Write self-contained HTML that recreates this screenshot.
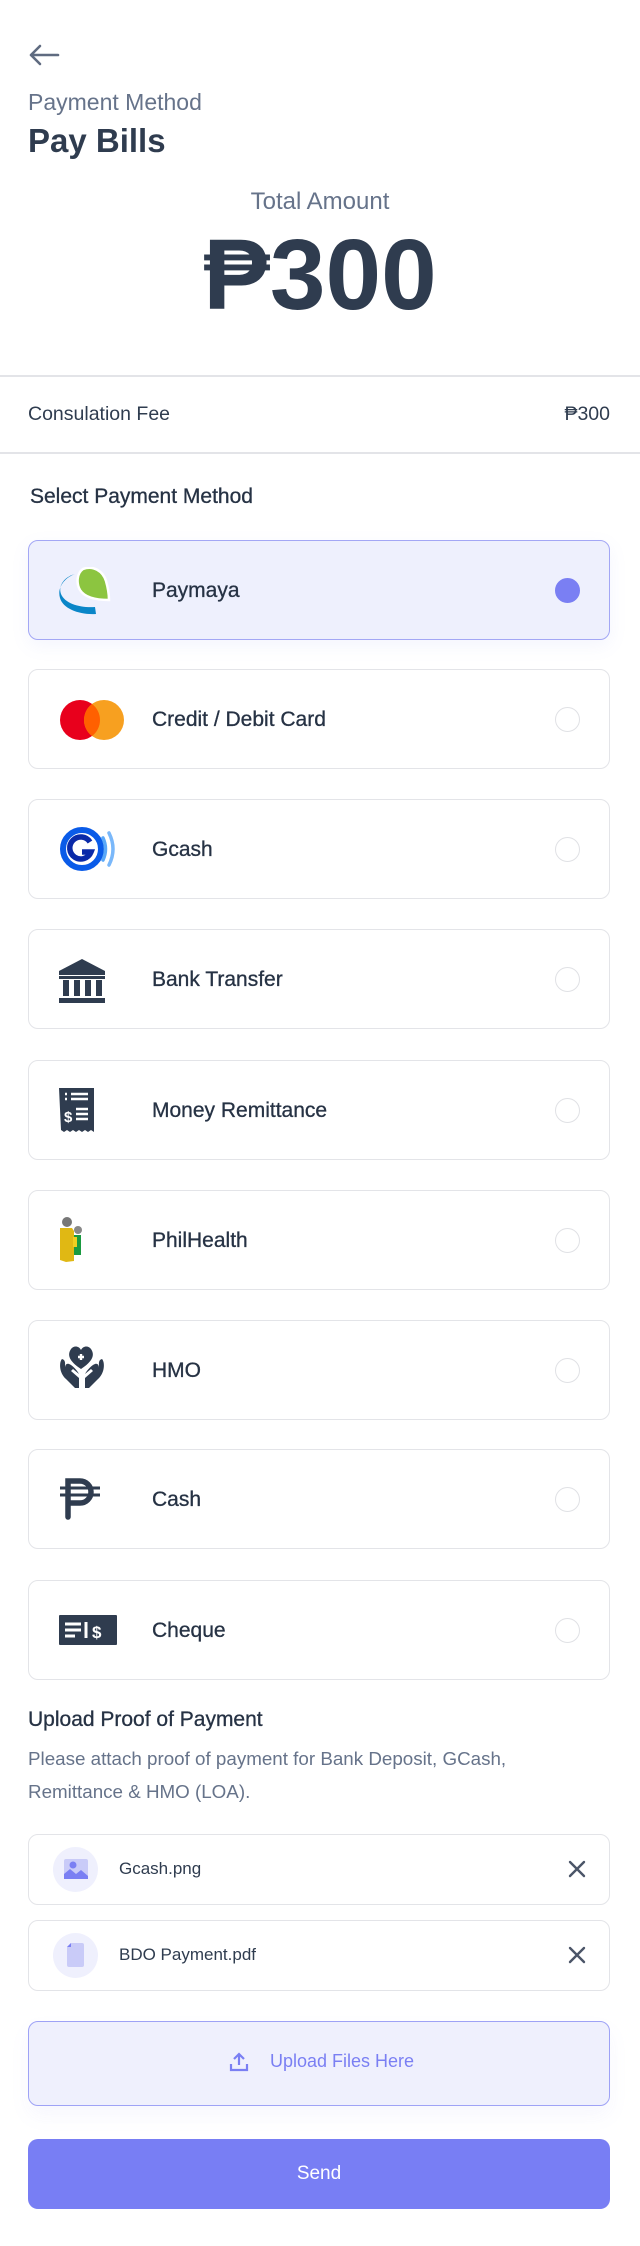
<!DOCTYPE html>
<html><head><meta charset="utf-8">
<style>
*{box-sizing:border-box;margin:0;padding:0}
body{width:640px;height:2246px;background:#fff;font-family:"Liberation Sans","DejaVu Sans",sans-serif;color:#2f3c4f;position:relative;overflow:hidden}
.a{position:absolute}
.card{position:absolute;left:28px;width:582px;height:100px;border:1.5px solid #e3e4e8;border-radius:10px;background:#fff}
.card.sel{background:#eef0fd;border-color:#a3a7f5;box-shadow:0 6px 18px rgba(120,125,240,0.08)}
.card .lbl{position:absolute;left:123px;top:1px;line-height:97px;font-size:21px;color:#263244;-webkit-text-stroke:0.3px #263244}
.card .rad{position:absolute;left:526px;top:37px;width:25px;height:25px;border:1.5px solid #e0e1e5;border-radius:50%}
.card.sel .rad{background:#7a7ff3;border-color:#7a7ff3}
.card .ic{position:absolute;left:30px;top:26px}
.file{position:absolute;left:28px;width:582px;height:71px;border:1.5px solid #e3e4e8;border-radius:10px;background:#fff}
.file .circ{position:absolute;left:24px;top:12px;width:45px;height:45px;border-radius:50%;background:#eff0fd}
.file .nm{position:absolute;left:90px;top:0;line-height:68px;font-size:17px;color:#2f3c4f}
.file .x{position:absolute;left:539px;top:25px}
</style></head><body>
<svg class="a" style="left:28px;top:44px" width="32" height="22" viewBox="0 0 32 22"><path d="M30 11H3M12 2L3 11l9 9" fill="none" stroke="#5f6b80" stroke-width="2.6" stroke-linecap="round" stroke-linejoin="round"/></svg>
<div class="a" style="left:28px;top:89px;font-size:23px;color:#66738a">Payment Method</div>
<div class="a" style="left:28px;top:122px;font-size:33px;font-weight:bold;color:#2f3c4f">Pay Bills</div>
<div class="a" style="left:0;width:640px;text-align:center;top:188px;font-size:24px;color:#66738a">Total Amount</div>
<div class="a" style="left:0;width:640px;text-align:center;top:219px;font-size:100px;line-height:112px;font-weight:bold;color:#2f3c4f">₱300</div>
<div class="a" style="left:0;top:375px;width:640px;height:1.5px;background:#e3e4e8"></div>
<div class="a" style="left:28px;top:403px;font-size:19.5px;color:#2f3c4f">Consulation Fee</div>
<div class="a" style="right:30px;top:403px;font-size:19.5px;color:#2f3c4f">₱300</div>
<div class="a" style="left:0;top:452px;width:640px;height:1.5px;background:#e3e4e8"></div>
<div class="a" style="left:30px;top:485px;font-size:21px;color:#263244;-webkit-text-stroke:0.3px #263244">Select Payment Method</div>

<div class="card sel" style="top:540px"><svg class="ic" style="top:26px" width="54" height="48" viewBox="0 0 54 48"><path d="M16 7C5 10 -1 19 2 27c4 10 20 14 34 13l1 7C21 48 4 42 1 31-2 21 5 11 16 7z" fill="#0a86c8"/><path d="M24 2c10-4 20 2 23 12 2 7 3 13 3 19-12 0-24-2-29-10-4-7-3-17 3-21z" fill="#8cc540" stroke="#fff" stroke-width="2.5"/></svg><div class="lbl">Paymaya</div><div class="rad"></div></div>

<div class="card" style="top:669px"><svg class="ic" style="top:29px" width="66" height="42" viewBox="0 0 66 42"><circle cx="21" cy="21" r="20" fill="#e8001c"/><circle cx="45" cy="21" r="20" fill="#f7a020"/><path d="M33 5a20 20 0 0 1 0 32a20 20 0 0 1 0-32z" fill="#ff6000"/></svg><div class="lbl">Credit / Debit Card</div><div class="rad"></div></div>

<div class="card" style="top:799px"><svg class="ic" style="top:24px" width="56" height="50" viewBox="0 0 56 50"><circle cx="23" cy="25" r="19" fill="none" stroke="#0a5be8" stroke-width="6"/><path d="M31 18a11 11 0 1 0 1 10H23" fill="none" stroke="#0a2aa8" stroke-width="5.5"/><path d="M44 14q5 11 0 22" fill="none" stroke="#5aa8f8" stroke-width="3.5" stroke-linecap="round"/><path d="M50 9q8 16 0 32" fill="none" stroke="#7ab8fa" stroke-width="3.5" stroke-linecap="round"/></svg><div class="lbl">Gcash</div><div class="rad"></div></div>

<div class="card" style="top:929px"><svg class="ic" style="top:29px" width="46" height="46" viewBox="0 0 46 46"><path d="M23 0L0 12v4h46v-4z" fill="#2f3c4f"/><rect x="0" y="17" width="46" height="3" fill="#2f3c4f"/><rect x="4" y="21" width="6" height="16" fill="#2f3c4f"/><rect x="15" y="21" width="6" height="16" fill="#2f3c4f"/><rect x="26" y="21" width="6" height="16" fill="#2f3c4f"/><rect x="37" y="21" width="6" height="16" fill="#2f3c4f"/><rect x="0" y="39" width="46" height="5" fill="#2f3c4f"/></svg><div class="lbl">Bank Transfer</div><div class="rad"></div></div>

<div class="card" style="top:1060px"><svg class="ic" style="top:27px" width="36" height="46" viewBox="0 0 36 46"><path d="M0 0h35v44l-3-2-3 2-3-2-3 2-3-2-3 2-3-2-3 2-3-2-3 2-3-2z" fill="#2f3c4f"/><g stroke="#fff" stroke-width="2.4"><path d="M6 6h2M12 6h17M6 11h2M12 11h17M17 21h12M17 26h12M17 31h12"/></g><text x="5" y="34" font-size="15" font-weight="bold" fill="#fff" font-family="Liberation Sans">$</text></svg><div class="lbl">Money Remittance</div><div class="rad"></div></div>

<div class="card" style="top:1190px"><svg class="ic" style="top:26px" width="30" height="46" viewBox="0 0 30 46"><circle cx="8" cy="5" r="5" fill="#777"/><circle cx="19" cy="13" r="4" fill="#888"/><path d="M1 11h12l2 3v30l-8 1-6-2z" fill="#e0b814"/><path d="M15 18h7v20h-7z" fill="#1a9a40"/><path d="M14 20h4v10h-4z" fill="#f0cf20"/></svg><div class="lbl">PhilHealth</div><div class="rad"></div></div>

<div class="card" style="top:1320px"><svg class="ic" style="top:24px" width="46" height="46" viewBox="0 0 46 46"><path d="M22 24C10 16 8 10 12 4c3-4 8-3 10 1 2-4 7-5 10-1 4 6 2 12-10 20z" fill="#2f3c4f"/><path d="M19 12h6M22 9v6" stroke="#fff" stroke-width="2.4"/><path d="M3 14c-3 3-3 14 4 20l9 9h4V33l-8-7 2-2 6 5c-2-4-7-9-10-10-3-1-4 2-4 4 0-4 1-8-3-9zM43 14c3 3 3 14-4 20l-9 9h-4V33l8-7-2-2-6 5c2-4 7-9 10-10 3-1 4 2 4 4 0-4-1-8 3-9z" fill="#2f3c4f"/></svg><div class="lbl">HMO</div><div class="rad"></div></div>

<div class="card" style="top:1449px"><svg class="ic" style="top:28px" width="42" height="42" viewBox="0 0 42 42"><path d="M9 39V3h12a11 11 0 0 1 0 22H9" fill="none" stroke="#2f3c4f" stroke-width="5.5" stroke-linecap="round"/><path d="M1 10h40M1 17h40" stroke="#2f3c4f" stroke-width="3"/></svg><div class="lbl">Cash</div><div class="rad"></div></div>

<div class="card" style="top:1580px"><svg class="ic" style="top:34px" width="58" height="32" viewBox="0 0 58 32"><rect width="58" height="30" rx="1" fill="#2f3c4f"/><path d="M6 9h16M6 15h16M6 21h10M27 7v16" stroke="#fff" stroke-width="3"/><text x="33" y="23" font-size="17" font-weight="bold" fill="#fff" font-family="Liberation Sans">$</text></svg><div class="lbl">Cheque</div><div class="rad"></div></div>

<div class="a" style="left:28px;top:1708px;font-size:21px;color:#263244;-webkit-text-stroke:0.3px #263244">Upload Proof of Payment</div>
<div class="a" style="left:28px;top:1742px;font-size:18.8px;line-height:33px;color:#66738a;width:600px">Please attach proof of payment for Bank Deposit, GCash,<br>Remittance &amp; HMO (LOA).</div>

<div class="file" style="top:1834px"><div class="circ"><svg style="position:absolute;left:11px;top:12px" width="24" height="20" viewBox="0 0 24 20"><rect width="24" height="20" rx="2" fill="#c9cbf8"/><circle cx="9" cy="6" r="3.5" fill="#7a7ff3"/><path d="M0 20v-5l6-5 6 5 5-4 7 6v3z" fill="#7a7ff3"/></svg></div><div class="nm">Gcash.png</div><svg class="x" width="18" height="18" viewBox="0 0 18 18"><path d="M2 2l14 14M16 2L2 16" stroke="#4b5568" stroke-width="2.4" stroke-linecap="round"/></svg></div>

<div class="file" style="top:1920px"><div class="circ"><svg style="position:absolute;left:14px;top:10px" width="17" height="24" viewBox="0 0 17 24"><path d="M4 0h11a2 2 0 0 1 2 2v20a2 2 0 0 1-2 2H2a2 2 0 0 1-2-2V4z" fill="#c9cbf8"/><path d="M0 4L4 0v4z" fill="#7a7ff3"/></svg></div><div class="nm">BDO Payment.pdf</div><svg class="x" width="18" height="18" viewBox="0 0 18 18"><path d="M2 2l14 14M16 2L2 16" stroke="#4b5568" stroke-width="2.4" stroke-linecap="round"/></svg></div>

<div class="a" style="left:28px;top:2021px;width:582px;height:85px;background:#eff0fd;border:1.5px solid #9ea2f6;border-radius:10px;box-shadow:0 10px 20px rgba(120,125,240,0.06)"></div>
<svg class="a" style="left:229px;top:2052px" width="20" height="20" viewBox="0 0 20 20"><path d="M10 13V2M5 7l5-5 5 5M2 12v6h16v-6" fill="none" stroke="#7a7ff3" stroke-width="2.2"/></svg>
<div class="a" style="left:270px;top:2051px;font-size:18px;color:#7a7ff3">Upload Files Here</div>

<div class="a" style="left:28px;top:2139px;width:582px;height:70px;background:#787ef4;border-radius:10px;color:#fff;font-size:19px;text-align:center;line-height:70px">Send</div>
</body></html>
